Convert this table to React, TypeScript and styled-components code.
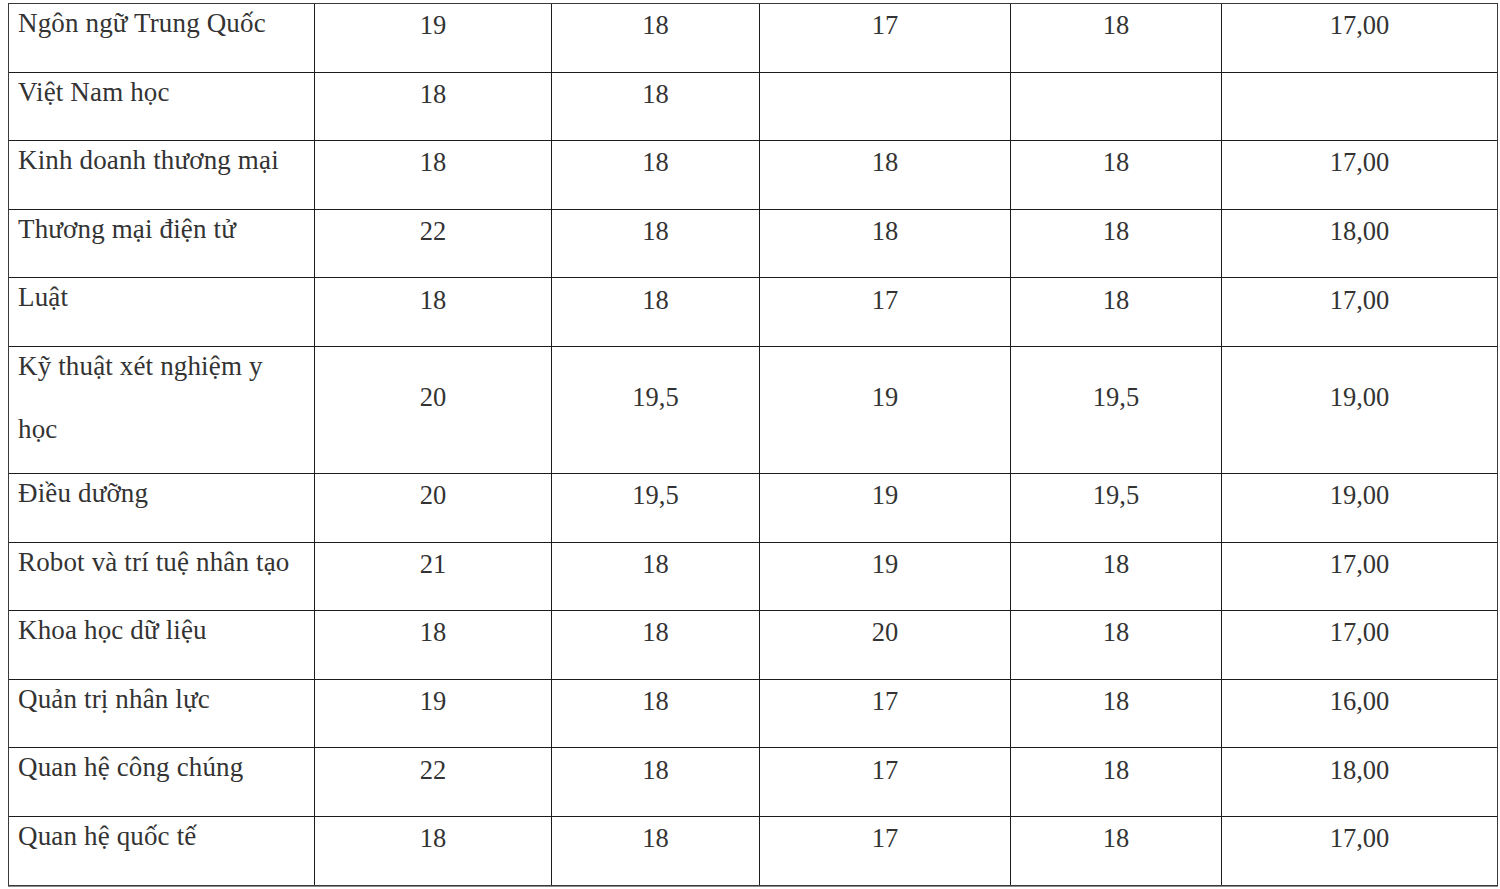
import styled, { createGlobalStyle } from 'styled-components';

const GlobalStyle = createGlobalStyle`
  * {
    box-sizing: border-box;
  }
  body {
    margin: 0;
    background: #ffffff;
    font-family: "Liberation Serif", "Times New Roman", serif;
  }
`;

type ScoreRow = {
  name: string;
  values: string[];
};

const rows: ScoreRow[] = [
  { name: 'Ngôn ngữ Trung Quốc', values: ['19', '18', '17', '18', '17,00'] },
  { name: 'Việt Nam học', values: ['18', '18', '', '', ''] },
  { name: 'Kinh doanh thương mại', values: ['18', '18', '18', '18', '17,00'] },
  { name: 'Thương mại điện tử', values: ['22', '18', '18', '18', '18,00'] },
  { name: 'Luật', values: ['18', '18', '17', '18', '17,00'] },
  { name: 'Kỹ thuật xét nghiệm y học', values: ['20', '19,5', '19', '19,5', '19,00'] },
  { name: 'Điều dưỡng', values: ['20', '19,5', '19', '19,5', '19,00'] },
  { name: 'Robot và trí tuệ nhân tạo', values: ['21', '18', '19', '18', '17,00'] },
  { name: 'Khoa học dữ liệu', values: ['18', '18', '20', '18', '17,00'] },
  { name: 'Quản trị nhân lực', values: ['19', '18', '17', '18', '16,00'] },
  { name: 'Quan hệ công chúng', values: ['22', '18', '17', '18', '18,00'] },
  { name: 'Quan hệ quốc tế', values: ['18', '18', '17', '18', '17,00'] },
];

const App = () => {
  return (
    <Page>
      <GlobalStyle />
      <Table>
        {rows.map((row) => (
          <Row key={row.name}>
            <NameCell>
              <CellText>{row.name}</CellText>
            </NameCell>
            {row.values.map((v, i) => (
              <ValueCell key={i}>
                <CellText>{v}</CellText>
              </ValueCell>
            ))}
          </Row>
        ))}
      </Table>
    </Page>
  );
};
export default App;

const Page = styled.div`
  width: 1500px;
  height: 889px;
  padding: 3px 0 0 8px;
  overflow: hidden;
`;

const Table = styled.div`
  width: 1490px;
  display: grid;
  grid-template-columns: 305px 236px 207px 250px 210px 275px;
  gap: 1px;
  background: #1c1c1c;
  border: 1px solid #3a3a3a;
  box-shadow: 0 1px 0 #8a8a8a;
`;

const Row = styled.div`
  display: contents;
`;

const Cell = styled.div`
  background: #ffffff;
  min-height: 67.6px;
  color: #333333;
  font-size: 27px;
`;

const NameCell = styled(Cell)`
  padding: 0 8px 0 9px;
  letter-spacing: 0.15px;
`;

const ValueCell = styled(Cell)`
  display: flex;
  align-items: center;
  justify-content: center;
  font-size: 26.5px;
`;

const CellText = styled.div`
  line-height: 63px;
  margin: -12px 0 12px;
  min-height: 63px;
`;
